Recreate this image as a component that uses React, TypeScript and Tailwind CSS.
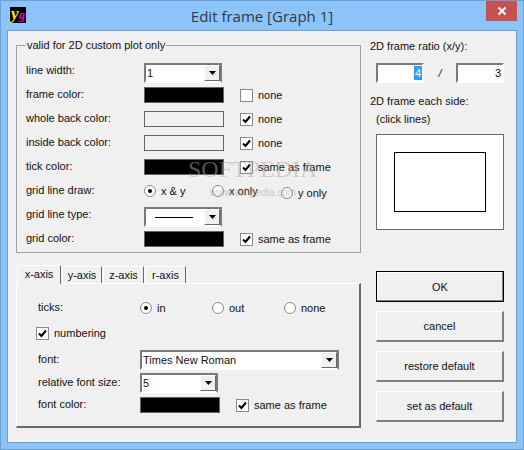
import React from "react";

const Arrow = () => (
  <span className="w-[16px] self-stretch bg-[#f0f0f0] border-t border-l border-white border-r border-b border-r-[#696969] border-b-[#696969] flex items-center justify-center">
    <svg width="7" height="4" viewBox="0 0 7 4"><path d="M0 0h7L3.5 4z" fill="#000" /></svg>
  </span>
);

const Combo = ({ w, children }: { w: string; children: React.ReactNode }) => (
  <div className={`${w} h-[20px] bg-white flex border-2 border-t-[#7a7a7a] border-l-[#7a7a7a] border-r-[#7a7a7a] border-b-white`}>
    <span className="flex-1 pl-[1px] leading-[16px] flex items-center">{children}</span>
    <Arrow />
  </div>
);

const Swatch = ({ on }: { on?: boolean }) => (
  <div className={`w-[80px] h-[16px] border border-[#646464] ${on ? "bg-black" : "bg-[#f0f0f0]"}`} />
);

const Check = ({ on, label, cls = "" }: { on?: boolean; label: string; cls?: string }) => (
  <div className={`flex items-center ${cls}`}>
    <span className="w-[13px] h-[13px] bg-white border border-[#8a8a8a] flex items-center justify-center mr-[5px]">
      {on && (
        <svg width="9" height="9" viewBox="0 0 9 9"><path d="M1 4.5l2.4 2.5L8 1.5" fill="none" stroke="#000" strokeWidth="2" /></svg>
      )}
    </span>
    <span>{label}</span>
  </div>
);

const Radio = ({ on, label, cls = "" }: { on?: boolean; label: string; cls?: string }) => (
  <div className={`flex items-center ${cls}`}>
    <span className="w-[12px] h-[12px] rounded-full bg-white border border-[#8a8a8a] flex items-center justify-center mr-[5px]">
      {on && <span className="w-[4px] h-[4px] rounded-full bg-black" />}
    </span>
    <span>{label}</span>
  </div>
);

const Row = ({ label, h = "h-[24px]", lw = "w-[118px]", children }: { label: string; h?: string; lw?: string; children: React.ReactNode }) => (
  <div className={`flex items-center ${h}`}>
    <span className={`${lw} shrink-0 mb-[2px]`}>{label}</span>
    {children}
  </div>
);

const Tab = ({ label, w, active }: { label: string; w: string; active?: boolean }) => (
  <div
    className={`${w} border border-b-0 border-t-white border-l-white border-r-[#696969] flex justify-center ${
      active ? "h-[19px] pt-[1px] z-10 -mb-[1px] bg-[#f0f0f0]" : "h-[17px] pt-[1px]"
    }`}
  >
    {label}
  </div>
);

const Btn = ({ label, def }: { label: string; def?: boolean }) => (
  <div
    className={`w-[128px] h-[31px] bg-[#f0f0f0] flex items-center justify-center ${
      def
        ? "border border-black shadow-[inset_-1px_-1px_0_#808080,inset_1px_1px_0_#fff]"
        : "border-t border-l border-white border-r-2 border-b-2 border-r-[#808080] border-b-[#808080]"
    }`}
  >
    {label}
  </div>
);

const Input = ({ children }: { children: React.ReactNode }) => (
  <div className="w-[48px] h-[20px] bg-white border-2 border-t-[#7a7a7a] border-l-[#7a7a7a] border-r-white border-b-white flex items-center justify-end">
    {children}
  </div>
);

export default function App() {
  return (
    <div className="relative w-[524px] h-[450px] overflow-hidden bg-[#8cc4fa] border border-[#6c9fd4] flex flex-col text-[11px] leading-[14px] text-[#111] font-['Liberation_Sans',Arial,sans-serif]">
      <div className="h-[29px] shrink-0 relative flex items-center justify-center">
        <div className="absolute left-[9px] top-[6px] w-[16px] h-[16px] bg-black italic font-bold font-['Liberation_Serif',serif]">
          <span className="absolute left-[1px] -top-[1px] text-[17px] leading-[15px] text-[#f4f000]">y</span>
          <span className="absolute left-[9px] top-[2px] text-[12px] leading-[13px] text-[#e000d0]">g</span>
        </div>
        <span className="text-[15px] text-[#2c3a48] font-['Open_Sans',sans-serif]">Edit frame [Graph 1]</span>
        <div className="absolute right-[6px] top-0 w-[31px] h-[20px] bg-[#c75050] flex items-center justify-center">
          <svg width="10" height="10" viewBox="0 0 10 10"><path d="M1.5 1.5l7 7M8.5 1.5l-7 7" stroke="#fff" strokeWidth="2" /></svg>
        </div>
      </div>

      <div className="relative mx-[6px] w-[510px] h-[413px] bg-[#f0f0f0] border border-[#6f9fd0] flex pl-[8px] pt-[12px]">
        <div className="w-[345px] shrink-0 flex flex-col">
          <fieldset className="h-[210px] border border-[#a0a0a0] pl-[9px] pr-0 m-0 min-w-0">
            <legend className="px-[1px] leading-[4px] h-[4px]">valid for 2D custom plot only</legend>
            <div className="flex flex-col pt-[12px]">
              <Row label="line width:">
                <Combo w="w-[78px] mt-[4px]">1</Combo>
              </Row>
              <Row label="frame color:">
                <Swatch on />
                <Check cls="ml-[16px]" label="none" />
              </Row>
              <Row label="whole back color:">
                <Swatch />
                <Check cls="ml-[16px]" on label="none" />
              </Row>
              <Row label="inside back color:">
                <Swatch />
                <Check cls="ml-[16px]" on label="none" />
              </Row>
              <Row label="tick color:">
                <Swatch on />
                <Check cls="ml-[16px]" on label="same as frame" />
              </Row>
              <Row label="grid line draw:">
                <Radio on label="x & y" cls="w-[68px]" />
                <Radio cls="w-[69px]" label="x only" />
                <Radio cls="mt-[3px]" label="y only" />
              </Row>
              <Row label="grid line type:">
                <Combo w="w-[78px] mt-[4px]">
                  <span className="ml-[8px] w-[38px] h-[1px] bg-black" />
                </Combo>
              </Row>
              <Row label="grid color:">
                <Swatch on />
                <Check cls="ml-[16px]" on label="same as frame" />
              </Row>
            </div>
          </fieldset>

          <div className="mt-[12px] flex items-end pl-[1px] gap-[1px] h-[18px]">
            <Tab active w="w-[44px]" label="x-axis" />
            <Tab w="w-[40px]" label="y-axis" />
            <Tab w="w-[41px]" label="z-axis" />
            <Tab w="w-[41px]" label="r-axis" />
          </div>
          <div className="h-[145px] border-t border-l border-white border-r-2 border-b-2 border-r-[#696969] border-b-[#696969] pl-[21px] pt-[14px]">
            <div className="flex items-center h-[20px]">
              <span className="w-[102px] mb-[2px]">ticks:</span>
              <Radio on label="in" cls="w-[72px]" />
              <Radio label="out" cls="w-[72px]" />
              <Radio label="none" />
            </div>
            <div className="h-[30px] flex items-center -ml-[2px]">
              <Check on label="numbering" />
            </div>
            <Row label="font:" h="h-[20px] mt-[2px]" lw="w-[102px]">
              <Combo w="w-[199px]">Times New Roman</Combo>
            </Row>
            <Row label="relative font size:" h="h-[20px] mt-[3px]" lw="w-[102px]">
              <Combo w="w-[78px]">5</Combo>
            </Row>
            <Row label="font color:" h="h-[16px] mt-[4px]" lw="w-[102px]">
              <Swatch on />
              <Check cls="ml-[16px]" on label="same as frame" />
            </Row>
          </div>
        </div>

        <div className="ml-[15px] w-[128px] flex flex-col">
          <div className="-mt-[4px] -ml-[6px]">2D frame ratio (x/y):</div>
          <div className="mt-[10px] flex items-center h-[20px]">
            <Input>
              <span className="bg-[#3399ff] text-white px-[1px]">4</span>
            </Input>
            <span className="w-[32px] text-center italic">/</span>
            <Input>
              <span className="pr-[1px]">3</span>
            </Input>
          </div>
          <div className="mt-[11px] -ml-[6px]">2D frame each side:</div>
          <div className="mt-[4px]">(click lines)</div>
          <div className="mt-[8px] w-[128px] h-[96px] bg-white border border-[#696969] flex items-center justify-center">
            <div className="w-[92px] h-[60px] border border-black" />
          </div>
          <div className="mt-[41px] flex flex-col gap-[9px]">
            <Btn def label="OK" />
            <Btn label="cancel" />
            <Btn label="restore default" />
            <Btn label="set as default" />
          </div>
        </div>
      </div>

      <div className="absolute left-[187px] top-[156px] text-[24px] leading-[24px] text-[#a8a8a8]/50 font-['Liberation_Serif',serif] pointer-events-none">
        SOFTPEDIA
      </div>
      <div className="absolute left-[209px] top-[186px] text-[10px] leading-[12px] text-[#9a9a9a]/50 pointer-events-none">
        www.softpedia.com
      </div>
    </div>
  );
}
